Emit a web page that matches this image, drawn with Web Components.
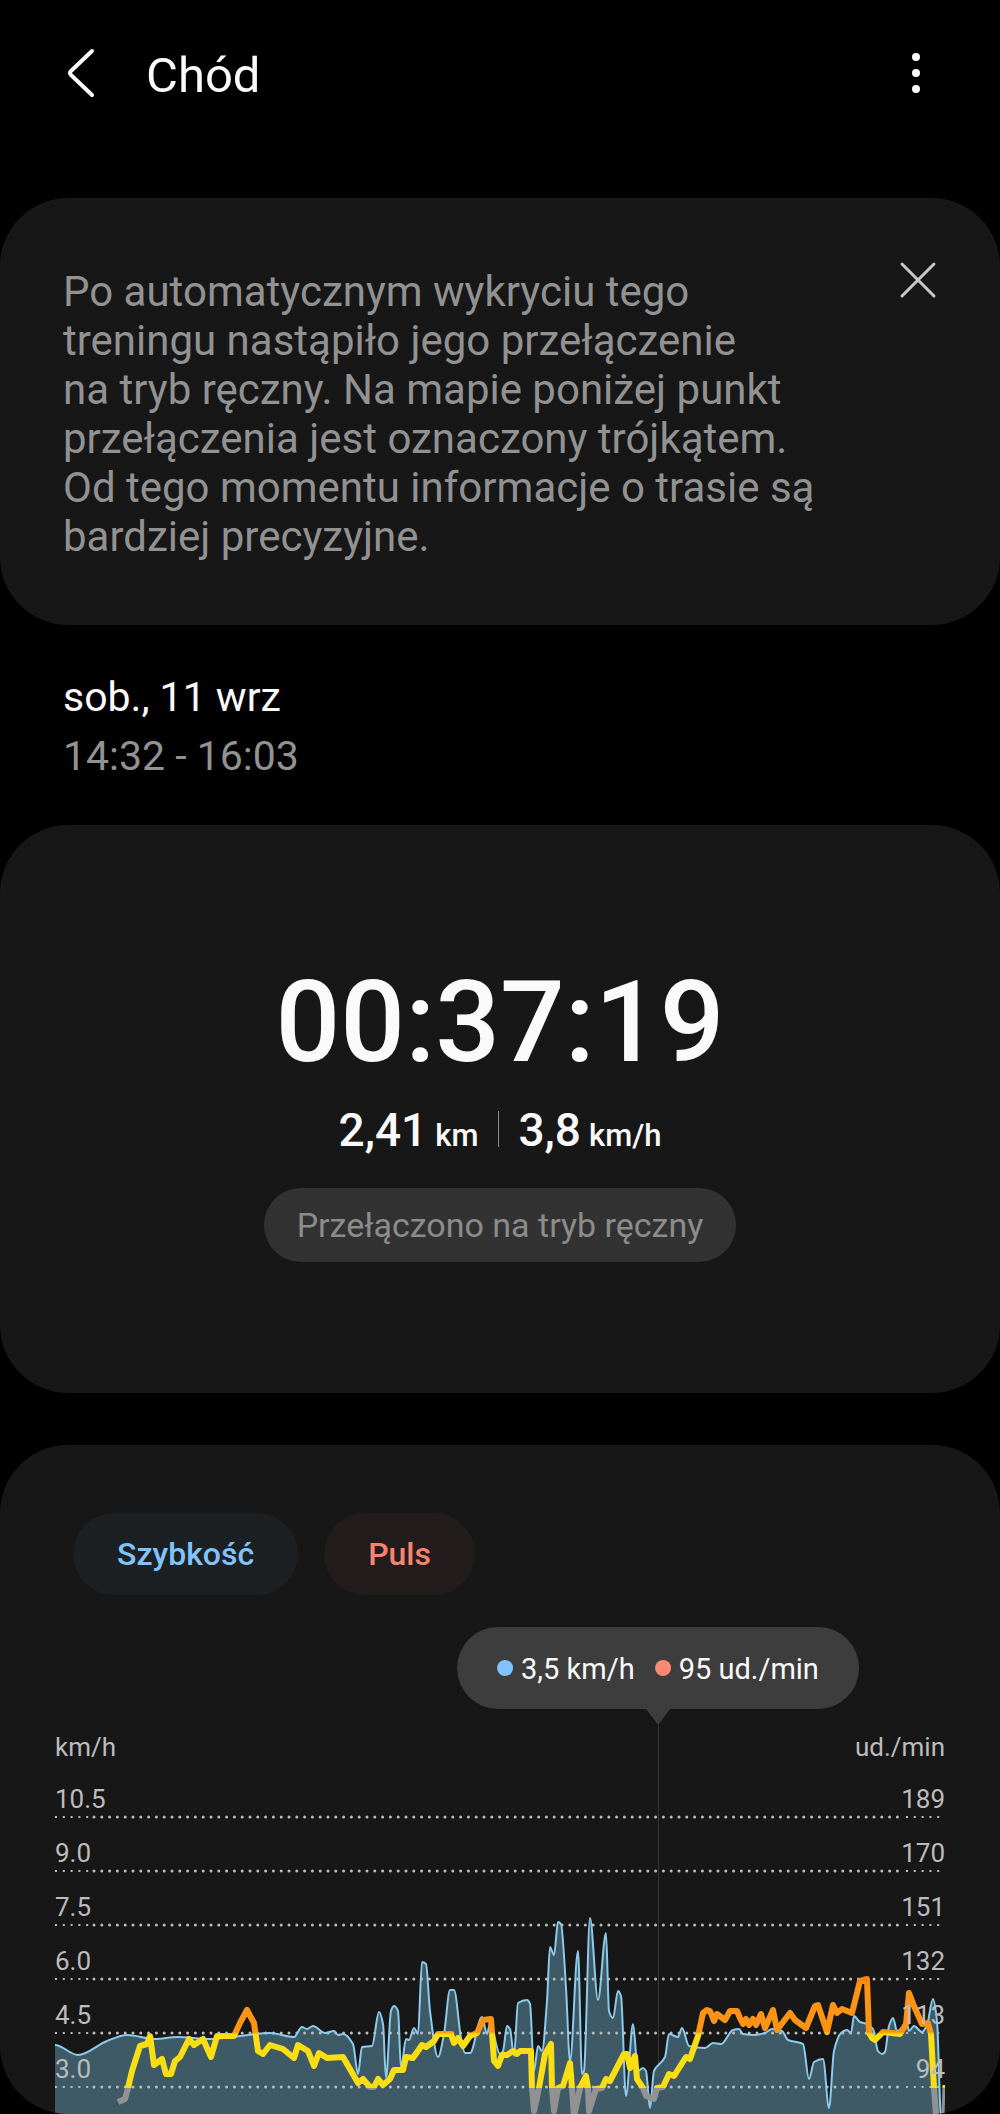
<!DOCTYPE html>
<html lang="pl">
<head>
<meta charset="UTF-8">
<meta name="viewport" content="width=device-width, initial-scale=1">
<title>Chód</title>
<style>
    body {
        margin: 0;
        background-color: #000;
        color: #fafafa;
        font-family: Roboto, "Noto Sans", sans-serif;
    }
</style>
</head>
<body>

<workout-header>Chód</workout-header>

<main>
    <info-card>Po automatycznym wykryciu tego treningu nastąpiło jego przełączenie na&nbsp;tryb ręczny. Na mapie poniżej punkt przełączenia jest oznaczony trójkątem. Od tego momentu informacje o trasie są bardziej precyzyjne.</info-card>

    <workout-date>
        <span slot="day">sob., 11 wrz</span>
        <span slot="hours">14:32 - 16:03</span>
    </workout-date>

    <workout-summary>
        <time slot="duration" datetime="PT37M19S">00:37:19</time>
        <stat-value slot="stat" unit="km">2,41</stat-value>
        <stat-value slot="stat" unit="km/h">3,8</stat-value>
        <span slot="status">Przełączono na tryb ręczny</span>
    </workout-summary>

    <workout-chart></workout-chart>
</main>

<script>
/* ====== HEADER ====== */

class WorkoutHeader extends HTMLElement {
    constructor() {
        super();
        this.attachShadow({ mode: "open" });
    }

    connectedCallback() {
        this.shadowRoot.innerHTML = `
            <style>
                :host {
                    display: block;
                }

                header {
                    display: flex;
                    align-items: center;
                    padding: 37px 52px 89px 60px;
                }

                button {
                    display: flex;
                    padding: 0;
                    border: none;
                    background: none;
                    color: inherit;
                    cursor: pointer;
                }

                h1 {
                    flex: 1;
                    margin: 0 0 0 44px;
                    padding-top: 6px;
                    font-size: 49px;
                    font-weight: 400;
                    line-height: 66px;
                }
            </style>

            <header>
                <button type="button" aria-label="Wstecz">
                    <svg width="42" height="64" viewBox="0 0 42 64" fill="none" stroke="currentColor" stroke-width="4" stroke-linecap="round" stroke-linejoin="round">
                        <path d="M32 10 L11 30 Q9 32 11 34 L32 54"/>
                    </svg>
                </button>
                <h1><slot></slot></h1>
                <button type="button" aria-label="Więcej opcji">
                    <svg width="64" height="64" viewBox="0 0 64 64" fill="currentColor">
                        <circle cx="32" cy="16" r="4"/>
                        <circle cx="32" cy="32" r="4"/>
                        <circle cx="32" cy="48" r="4"/>
                    </svg>
                </button>
            </header>
        `;
    }
}

/* ====== INFO CARD ====== */

class InfoCard extends HTMLElement {
    constructor() {
        super();
        this.attachShadow({ mode: "open" });
    }

    connectedCallback() {
        this.shadowRoot.innerHTML = `
            <style>
                :host {
                    display: flex;
                    align-items: flex-start;
                    gap: 72px;
                    padding: 60px 60px 64px 63px;
                    border-radius: 68px;
                    background-color: #171717;
                }

                :host([hidden]) {
                    display: none;
                }

                p {
                    flex: 1;
                    margin: 9px 0 0;
                    color: #929292;
                    font-size: 42px;
                    line-height: 49px;
                }

                button {
                    display: flex;
                    padding: 0;
                    border: none;
                    background: none;
                    color: #c8c8c8;
                    cursor: pointer;
                }
            </style>

            <p><slot></slot></p>
            <button type="button" aria-label="Zamknij">
                <svg width="44" height="44" viewBox="0 0 44 44" stroke="currentColor" stroke-width="3" stroke-linecap="round">
                    <path d="M6 6 L38 38 M38 6 L6 38"/>
                </svg>
            </button>
        `;

        this.shadowRoot
            .querySelector("button")
            .addEventListener("click", () => { this.hidden = true; });
    }
}

/* ====== DATE ====== */

class WorkoutDate extends HTMLElement {
    constructor() {
        super();
        this.attachShadow({ mode: "open" });
    }

    connectedCallback() {
        this.shadowRoot.innerHTML = `
            <style>
                :host {
                    display: block;
                    padding: 43px 63px 39px;
                    font-size: 41px;
                    line-height: 59px;
                }

                .hours {
                    color: #929292;
                }
            </style>

            <div><slot name="day"></slot></div>
            <div class="hours"><slot name="hours"></slot></div>
        `;
    }
}

/* ====== SUMMARY ====== */

class StatValue extends HTMLElement {
    constructor() {
        super();
        this.attachShadow({ mode: "open" });
    }

    connectedCallback() {
        this.shadowRoot.innerHTML = `
            <style>
                :host {
                    display: flex;
                    align-items: baseline;
                    gap: 8px;
                    font-size: 46px;
                    font-weight: 500;
                    line-height: 54px;
                }

                .unit {
                    font-size: 31px;
                    line-height: 36px;
                }
            </style>

            <span><slot></slot></span>
            <span class="unit">${this.getAttribute("unit")}</span>
        `;
    }
}

class WorkoutSummary extends HTMLElement {
    constructor() {
        super();
        this.attachShadow({ mode: "open" });
    }

    connectedCallback() {
        this.shadowRoot.innerHTML = `
            <style>
                :host {
                    display: flex;
                    flex-direction: column;
                    align-items: center;
                    gap: 31px;
                    padding: 147px 64px 131px;
                    border-radius: 68px;
                    background-color: #171717;
                }

                .duration {
                    font-size: 114px;
                    font-weight: 500;
                    line-height: 100px;
                }

                .stats {
                    display: flex;
                    align-items: flex-start;
                }

                ::slotted(stat-value:nth-of-type(2)) {
                    margin-left: 20px;
                    padding-left: 20px;
                    background: linear-gradient(#8a8a8a, #8a8a8a) no-repeat 0 8px / 1px 36px;
                }

                .status {
                    padding: 0 33px;
                    border-radius: 37px;
                    background-color: #323232;
                    color: #8c8c8c;
                    font-size: 34px;
                    line-height: 74px;
                }
            </style>

            <div class="duration"><slot name="duration"></slot></div>
            <div class="stats"><slot name="stat"></slot></div>
            <div class="status"><slot name="status"></slot></div>
        `;
    }
}

/* ====== CHART ====== */

const SPEED = [
    [0,282],[23,292],[52,278],[72,272],[100,276],[122,274],[155,276],[185,273],[215,270],
    [239,274],[247,264],[252,266],[258,263],[270,270],[279,268],[283,272],[288,271],[298,281],
    [303,311],[307,284],[317,283],[324,249],[328,261],[331,315],[336,248],[339,243],[343,248],
    [346,305],[351,276],[354,277],[359,265],[363,271],[367,199],[371,201],[375,248],[383,294],
    [389,271],[395,227],[399,227],[406,275],[410,290],[415,290],[427,254],[432,271],[435,261],
    [445,291],[448,288],[452,263],[455,266],[459,293],[463,240],[472,237],[475,241],[479,308],
    [483,283],[487,288],[492,238],[495,184],[499,192],[503,159],[506,161],[511,225],[515,298],
    [523,188],[527,311],[529,308],[535,155],[543,237],[551,170],[554,248],[558,255],[563,228],
    [566,233],[571,333],[578,261],[583,308],[588,305],[591,308],[595,345],[599,308],[610,294],
    [614,271],[623,274],[627,265],[634,283],[650,285],[658,280],[666,281],[678,267],[684,266],
    [688,271],[700,272],[710,270],[717,266],[727,268],[733,277],[748,281],[754,316],[759,299],
    [768,296],[774,345],[779,288],[786,270],[792,267],[796,270],[799,253],[805,259],[812,261],
    [818,266],[823,288],[827,291],[830,289],[834,263],[838,255],[842,268],[852,261],[854,268],
    [859,263],[867,269],[872,262],[878,236],[882,258],[886,352]
];

const PULSE = [
    [63,339],[70,336],[73,325],[77,308],[85,283],[92,281],[95,273],[99,302],[107,296],[111,311],
    [116,311],[120,298],[125,294],[134,276],[139,282],[148,276],[156,294],[162,273],[179,273],
    [185,260],[192,247],[199,260],[203,288],[208,291],[215,282],[228,286],[239,295],[243,282],
    [253,288],[259,303],[264,290],[272,295],[288,294],[303,320],[308,316],[315,324],[319,324],
    [323,316],[328,322],[335,316],[339,307],[348,307],[351,294],[358,295],[367,282],[371,284],
    [379,278],[383,271],[396,271],[399,280],[403,275],[408,283],[415,273],[422,270],[428,257],
    [436,256],[439,298],[443,303],[447,292],[452,292],[458,288],[462,291],[465,288],[476,288],
    [477,325],[479,348],[484,325],[490,291],[496,281],[497,325],[499,348],[503,325],[508,323],
    [515,300],[517,325],[519,354],[525,325],[531,313],[533,325],[534,348],[541,326],[547,325],
    [551,316],[555,318],[569,291],[572,291],[575,305],[580,293],[582,316],[588,325],[591,333],
    [599,336],[602,325],[608,324],[614,311],[619,313],[631,294],[635,296],[643,273],[648,250],
    [652,247],[655,248],[659,258],[662,251],[670,257],[675,248],[682,248],[685,255],[688,261],
    [691,256],[694,262],[698,256],[701,262],[706,251],[710,265],[718,247],[722,267],[735,250],
    [740,257],[751,265],[760,243],[763,242],[772,269],[778,242],[782,250],[787,246],[797,250],
    [805,218],[812,216],[814,270],[817,275],[820,277],[828,269],[845,271],[851,261],[854,230],
    [859,243],[867,261],[873,260],[876,271],[879,325],[881,352]
];

// flat tangent at every peak and valley, so the curve never overshoots
function smoothPath(points) {
    const slopes = points.map((p, i) => {
        const prev = points[i - 1];
        const next = points[i + 1];
        if (!prev || !next) return 0;
        const a = (p[1] - prev[1]) / (p[0] - prev[0]);
        const b = (next[1] - p[1]) / (next[0] - p[0]);
        return a * b <= 0 ? 0 : 2 * a * b / (a + b);
    });

    let d = `M${points[0][0]} ${points[0][1]}`;
    for (let i = 1; i < points.length; i++) {
        const [x0, y0] = points[i - 1];
        const [x1, y1] = points[i];
        const h = (x1 - x0) / 3;
        d += `C${x0 + h} ${y0 + slopes[i - 1] * h} ${x1 - h} ${y1 - slopes[i] * h} ${x1} ${y1}`;
    }
    return d;
}

class SeriesChip extends HTMLElement {
    constructor() {
        super();
        this.attachShadow({ mode: "open" });
    }

    connectedCallback() {
        this.shadowRoot.innerHTML = `
            <style>
                :host {
                    display: block;
                }

                button {
                    display: block;
                    padding: 0 44px;
                    border: none;
                    border-radius: 41px;
                    background-color: var(--chip-background);
                    color: var(--chip-color);
                    font-family: inherit;
                    font-size: 32px;
                    font-weight: 500;
                    line-height: 82px;
                    cursor: pointer;
                }
            </style>

            <button type="button" aria-pressed="true"><slot></slot></button>
        `;

        const button = this.shadowRoot.querySelector("button");
        button.addEventListener("click", () => {
            const on = button.getAttribute("aria-pressed") !== "true";
            button.setAttribute("aria-pressed", on);
            this.dispatchEvent(new CustomEvent("toggle-series", { detail: on }));
        });
    }
}

class ChartTooltip extends HTMLElement {
    constructor() {
        super();
        this.attachShadow({ mode: "open" });
    }

    connectedCallback() {
        this.shadowRoot.innerHTML = `
            <style>
                :host {
                    display: flex;
                    gap: 20px;
                    padding: 0 40px;
                    border-radius: 41px;
                    background-color: #3d3d3d;
                    font-size: 29px;
                    line-height: 84px;
                    height: 82px;
                    white-space: nowrap;
                }

                ::slotted(span)::before {
                    content: "";
                    display: inline-block;
                    width: 16px;
                    height: 16px;
                    margin-right: 8px;
                    border-radius: 50%;
                    background-color: var(--dot);
                    vertical-align: 3px;
                }

                .tip {
                    position: absolute;
                    top: 100%;
                    left: 50%;
                    margin-left: -12px;
                    border: 12px solid transparent;
                    border-top: 16px solid #3d3d3d;
                    border-bottom: none;
                }
            </style>

            <slot></slot>
            <div class="tip"></div>
        `;
    }
}

class WorkoutChart extends HTMLElement {
    constructor() {
        super();
        this.attachShadow({ mode: "open" });
    }

    connectedCallback() {
        this.render();

        for (const name of ["speed", "pulse"]) {
            this.shadowRoot
                .querySelector(`series-chip.${name}`)
                .addEventListener("toggle-series", (e) => {
                    this.shadowRoot
                        .querySelectorAll(`g.${name}`)
                        .forEach((g) => { g.style.display = e.detail ? "" : "none"; });
                });
        }
    }

    render() {
        const rows = [
            ["10.5", "189"], ["9.0", "170"], ["7.5", "151"],
            ["6.0", "132"], ["4.5", "113"], ["3.0", "94"]
        ];

        const labels = rows
            .map(([speed, pulse]) => `<div class="row"><span>${speed}</span><span>${pulse}</span></div>`)
            .join("");

        // dots get thinner below the labels at both ends
        const lines = rows.map((row, i) => {
            const y = (i + 1) * 54;
            return `
                <path class="thin" d="M0 ${y} H36 M851 ${y} H890"/>
                <path class="dots" d="M39 ${y} H848"/>
            `;
        }).join("");

        const speedPath = smoothPath(SPEED);
        const pulsePoints = PULSE.map((p) => p.join(",")).join(" ");

        this.shadowRoot.innerHTML = `
            <style>
                :host {
                    display: block;
                    margin-top: 52px;
                    padding: 68px 55px 0;
                    border-radius: 68px;
                    background-color: #171717;
                    overflow: hidden;
                }

                .chips {
                    display: flex;
                    gap: 26px;
                    padding-left: 18px;
                }

                .speed {
                    --chip-color: #81c4fc;
                    --chip-background: #1c2023;
                }

                .pulse {
                    --chip-color: #f8836f;
                    --chip-background: #231c1c;
                }

                .chart {
                    position: relative;
                    margin-top: 136px;
                    color: #bcbcbc;
                    font-size: 26px;
                    line-height: 32px;
                }

                .units, .row {
                    display: flex;
                    justify-content: space-between;
                }

                .plot {
                    position: relative;
                    padding-bottom: 27px;
                }

                .row {
                    position: relative;
                    padding: 20px 0 2px;
                }

                svg {
                    position: absolute;
                    inset: 0;
                    width: 100%;
                    height: 100%;
                }

                .dots, .thin {
                    fill: none;
                    stroke: #bdbdbd;
                    stroke-width: 3;
                    stroke-linecap: round;
                    stroke-dasharray: 0 7.8;
                }

                .thin {
                    stroke-width: 2;
                    stroke-linecap: butt;
                    stroke-dasharray: 2 5.8;
                }

                .area {
                    fill: #3e5a66;
                }

                .speed-line {
                    fill: none;
                    stroke: #8ccbec;
                    stroke-width: 2;
                    stroke-linejoin: round;
                }

                .pulse-line {
                    fill: none;
                    stroke: url(#zones);
                    stroke-width: 6;
                    stroke-linejoin: round;
                }

                /* selected moment, stays behind the plot */
                .cursor {
                    position: absolute;
                    top: -6px;
                    bottom: 0;
                    left: 67.75%;
                    width: 1px;
                    background-color: #363636;
                }

                chart-tooltip {
                    position: absolute;
                    top: -104px;
                    left: 67.75%;
                    transform: translateX(-50%);
                    color: #fafafa;
                }
            </style>

            <div class="chips">
                <series-chip class="speed">Szybkość</series-chip>
                <series-chip class="pulse">Puls</series-chip>
            </div>

            <div class="chart">
                <div class="cursor"></div>
                <div class="units"><span>km/h</span><span>ud./min</span></div>
                <div class="plot">
                    <svg viewBox="0 0 890 351" preserveAspectRatio="none" aria-hidden="true">
                        <defs>
                            <linearGradient id="zones" gradientUnits="userSpaceOnUse" x1="0" y1="210" x2="0" y2="350">
                                <stop offset="0" stop-color="#f57c14"/>
                                <stop offset=".1" stop-color="#fb9414"/>
                                <stop offset=".42" stop-color="#fb9414"/>
                                <stop offset=".44" stop-color="#fade14"/>
                                <stop offset=".82" stop-color="#fade14"/>
                                <stop offset=".82" stop-color="#929292"/>
                            </linearGradient>
                        </defs>
                        <g class="speed">
                            <path class="area" d="${speedPath}V352H0Z"/>
                        </g>
                        ${lines}
                        <g class="speed">
                            <path class="speed-line" d="${speedPath}"/>
                        </g>
                        <g class="pulse">
                            <polyline class="pulse-line" points="${pulsePoints}"/>
                            <path d="M888 352 L889 322" stroke="url(#zones)" stroke-width="3"/>
                        </g>
                    </svg>
                    ${labels}
                </div>
                <chart-tooltip>
                    <span style="--dot: #7fc4ff">3,5 km/h</span>
                    <span style="--dot: #ff8870">95 ud./min</span>
                </chart-tooltip>
            </div>
        `;
    }
}

customElements.define("workout-header", WorkoutHeader);
customElements.define("info-card", InfoCard);
customElements.define("workout-date", WorkoutDate);
customElements.define("stat-value", StatValue);
customElements.define("workout-summary", WorkoutSummary);
customElements.define("series-chip", SeriesChip);
customElements.define("chart-tooltip", ChartTooltip);
customElements.define("workout-chart", WorkoutChart);
</script>
</body>
</html>
